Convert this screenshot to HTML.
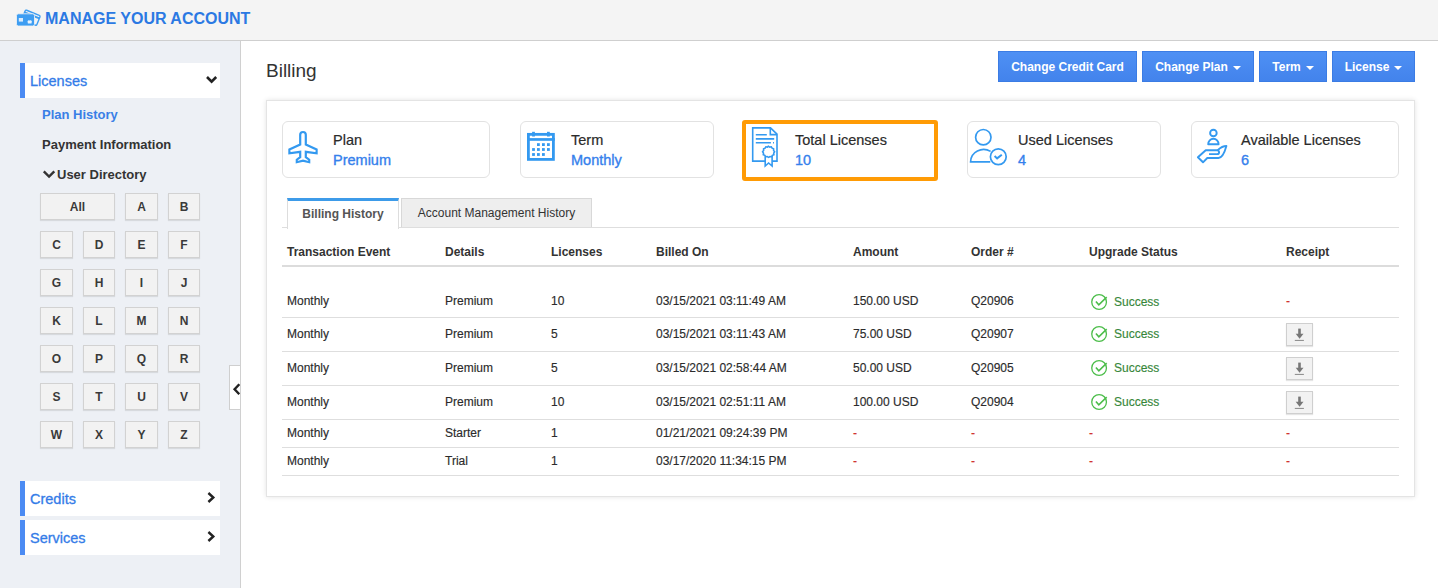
<!DOCTYPE html>
<html><head><meta charset="utf-8">
<style>
*{box-sizing:border-box;margin:0;padding:0}
html,body{width:1438px;height:588px;overflow:hidden;background:#fff;font-family:"Liberation Sans",sans-serif;color:#333}
.abs{position:absolute}
#hdr{position:absolute;left:0;top:0;width:1438px;height:41px;background:#f4f4f4;border-bottom:1px solid #cfcfcf}
#title{position:absolute;left:45px;top:10px;font-size:16px;font-weight:700;color:#2b79e3;line-height:18px;white-space:nowrap}
#side{position:absolute;left:0;top:41px;width:241px;height:547px;background:#edf0f5;border-right:1px solid #d0d0d0}
.sitem{position:absolute;left:20px;width:200px;height:35px;background:#fff;border-left:5px solid #4b8bf3}
.sitem span{position:absolute;left:5px;top:10px;font-size:14.5px;color:#347ce8;line-height:17px;-webkit-text-stroke:0.3px #347ce8}
.lb{position:absolute;width:32px;height:27px;background:#f2f2f2;border:1px solid #d2d2d2;box-shadow:0 1px 1px rgba(0,0,0,.09);font-size:12px;font-weight:700;color:#3a3a3a;text-align:center;line-height:26px}
.btn{position:absolute;top:51px;height:31px;background:linear-gradient(#4e90f4,#4383ec);border:1px solid #3b7ce4;color:#fff;font-size:12px;font-weight:700;line-height:31px;text-align:center;white-space:nowrap}
.caret{display:inline-block;width:0;height:0;border-left:4px solid transparent;border-right:4px solid transparent;border-top:4px solid #fff;vertical-align:middle;margin-left:5px;margin-top:0px}
#panel{position:absolute;left:266px;top:100px;width:1149px;height:397px;background:#fff;border:1px solid #e4e4e4;box-shadow:0 0 5px rgba(0,0,0,.11)}
.card{position:absolute;top:121px;height:57px;background:#fff;border:1px solid #e2e2e2;border-radius:6px}
.card .t1{position:absolute;top:10px;font-size:14.5px;color:#2b2b2b;-webkit-text-stroke:0.2px #2b2b2b;line-height:17px;white-space:nowrap}
.card .t2{position:absolute;top:30px;font-size:14.5px;color:#3580ec;font-weight:400;-webkit-text-stroke:0.35px #3580ec;line-height:17px;white-space:nowrap}
.th{position:absolute;top:245px;font-size:12px;font-weight:700;color:#333;line-height:14px;white-space:nowrap}
.td{position:absolute;font-size:12px;color:#2b2b2b;line-height:14px;white-space:nowrap;-webkit-text-stroke:0.15px #2b2b2b}
.hl{position:absolute;left:282px;width:1117px;height:1px;background:#dedede}
.td.red{color:#d0312d;-webkit-text-stroke:0.15px #d0312d}
.td.ok{color:#37873a;-webkit-text-stroke:0.15px #37873a}
.tabline{position:absolute;left:282px;top:227px;width:1117px;height:1px;background:#dedede}
.tab1{position:absolute;left:287px;top:198px;width:112px;height:31px;background:#fff;border-top:3px solid #3d9be9;border-left:1px solid #ddd;border-right:1px solid #ddd;font-size:12px;font-weight:700;color:#555;text-align:center;line-height:27px}
.tab2{position:absolute;left:401px;top:198px;width:191px;height:29px;background:#eeeeee;border:1px solid #d8d8d8;border-bottom:none;font-size:12px;color:#333;text-align:center;line-height:28px}
.ok-ic{position:absolute}
.dl{position:absolute;left:1286px;width:27px;height:23px;margin-top:1px;background:#f2f2f2;border:1px solid #cfcfcf;box-shadow:0 1px 1px rgba(0,0,0,.1)}
</style></head><body>
<div id="hdr"></div>
<div id="title">MANAGE YOUR ACCOUNT</div>

<div id="side"></div>
<div class="sitem" style="top:63px"><span>Licenses</span></div>
<div class="abs" style="left:42px;top:107px;font-size:13px;font-weight:700;color:#3a7fe6;line-height:15px">Plan History</div>
<div class="abs" style="left:42px;top:137px;font-size:13px;font-weight:700;color:#333;line-height:15px">Payment Information</div>
<div class="abs" style="left:57px;top:167px;font-size:13px;font-weight:700;color:#333;line-height:15px">User Directory</div>

<div class="lb" style="left:40px;top:193px;width:75px">All</div>
<div class="lb" style="left:125px;top:193px;width:33px">A</div>
<div class="lb" style="left:168px;top:193px">B</div>
<div class="lb" style="left:40px;top:231px;width:33px">C</div>
<div class="lb" style="left:83px;top:231px">D</div>
<div class="lb" style="left:125px;top:231px;width:33px">E</div>
<div class="lb" style="left:168px;top:231px">F</div>
<div class="lb" style="left:40px;top:269px;width:33px">G</div>
<div class="lb" style="left:83px;top:269px">H</div>
<div class="lb" style="left:125px;top:269px;width:33px">I</div>
<div class="lb" style="left:168px;top:269px">J</div>
<div class="lb" style="left:40px;top:307px;width:33px">K</div>
<div class="lb" style="left:83px;top:307px">L</div>
<div class="lb" style="left:125px;top:307px;width:33px">M</div>
<div class="lb" style="left:168px;top:307px">N</div>
<div class="lb" style="left:40px;top:345px;width:33px">O</div>
<div class="lb" style="left:83px;top:345px">P</div>
<div class="lb" style="left:125px;top:345px;width:33px">Q</div>
<div class="lb" style="left:168px;top:345px">R</div>
<div class="lb" style="left:40px;top:383px;width:33px">S</div>
<div class="lb" style="left:83px;top:383px">T</div>
<div class="lb" style="left:125px;top:383px;width:33px">U</div>
<div class="lb" style="left:168px;top:383px">V</div>
<div class="lb" style="left:40px;top:421px;width:33px">W</div>
<div class="lb" style="left:83px;top:421px">X</div>
<div class="lb" style="left:125px;top:421px;width:33px">Y</div>
<div class="lb" style="left:168px;top:421px">Z</div>

<div class="sitem" style="top:481px"><span>Credits</span></div>
<div class="sitem" style="top:520px"><span>Services</span></div>

<div class="abs" style="left:266px;top:60px;font-size:19px;color:#333;line-height:21px">Billing</div>

<div class="btn" style="left:998px;width:139px">Change Credit Card</div>
<div class="btn" style="left:1142px;width:112px">Change Plan<span class="caret"></span></div>
<div class="btn" style="left:1259px;width:68px">Term<span class="caret"></span></div>
<div class="btn" style="left:1332px;width:83px">License<span class="caret"></span></div>

<div id="panel"></div>
<div class="card" style="left:282px;width:208px"><div class="t1" style="left:50px">Plan</div><div class="t2" style="left:50px">Premium</div></div>
<div class="card" style="left:520px;width:194px"><div class="t1" style="left:50px">Term</div><div class="t2" style="left:50px">Monthly</div></div>
<div class="card" style="left:742px;top:120px;width:196px;height:61px;border:4px solid #ff9b05;border-radius:3px"><div class="t1" style="left:49px;top:8px">Total Licenses</div><div class="t2" style="left:49px;top:28px">10</div></div>
<div class="card" style="left:967px;width:194px"><div class="t1" style="left:50px">Used Licenses</div><div class="t2" style="left:50px">4</div></div>
<div class="card" style="left:1191px;width:208px"><div class="t1" style="left:49px">Available Licenses</div><div class="t2" style="left:49px">6</div></div>

<!-- logo -->
<svg class="abs" style="left:0;top:0" width="60" height="40" viewBox="0 0 60 40">
 <g transform="translate(0 2) rotate(22 31 17)"><rect x="22.5" y="10.5" width="16" height="10.5" rx="1.2" fill="#f4f4f4" stroke="#3d9df2" stroke-width="1.4"/><rect x="22.5" y="12.3" width="16" height="2" fill="#3d9df2"/></g>
 <rect x="16.5" y="13.8" width="18" height="12.2" rx="1.8" fill="#3d9df2" stroke="#f4f4f4" stroke-width="0.8"/>
 <rect x="18.8" y="18" width="4.2" height="3.6" fill="#d9ecfd"/>
 <path d="M27.5 21.3c0.6-1 1.6-1.3 2.2-0.5c0.6-0.8 1.6-0.5 2.2 0.5l-0.4 2.3h-3.6z" fill="#e8f3fe"/>
</svg>
<!-- licenses chevron -->
<svg class="abs" style="left:200px;top:70px" width="24" height="20"><path d="M7 7 L11.6 11.6 L16.2 7" fill="none" stroke="#222" stroke-width="2.6"/></svg>
<!-- user dir chevron -->
<svg class="abs" style="left:40px;top:168px" width="18" height="14"><path d="M3.8 3.4 L9.05 8.6 L14.3 3.4" fill="none" stroke="#333" stroke-width="2.4"/></svg>
<!-- credits chevron -->
<svg class="abs" style="left:200px;top:488px" width="20" height="20"><path d="M8.4 5 L13.3 9.5 L8.4 14" fill="none" stroke="#222" stroke-width="2.4"/></svg>
<svg class="abs" style="left:200px;top:527px" width="20" height="20"><path d="M8.4 5 L13.3 9.5 L8.4 14" fill="none" stroke="#222" stroke-width="2.4"/></svg>
<!-- plane -->
<svg class="abs" style="left:282px;top:124px" width="40" height="46"><path d="M18.2 10.8 A2.8 2.8 0 0 1 23.8 10.8 L23.8 20.5 L34.6 25.5 L34.6 29.3 L23.8 27.8 L23.8 33.2 L27.2 35.7 L27.2 38.2 L21 36.6 L14.8 38.2 L14.8 35.7 L18.2 33.2 L18.2 27.8 L7.4 29.3 L7.4 25.5 L18.2 20.5 Z" fill="none" stroke="#3399f0" stroke-width="2.2" stroke-linejoin="miter"/></svg>
<!-- calendar -->
<svg class="abs" style="left:520px;top:124px" width="42" height="46" fill="#3399f0">
 <rect x="8.4" y="10.35" width="25" height="25.05" fill="none" stroke="#3399f0" stroke-width="2.8"/>
 <rect x="7" y="14.1" width="27.8" height="2.7"/>
 <rect x="12.1" y="7.8" width="2.8" height="4.7"/><rect x="27" y="7.8" width="2.8" height="4.7"/>
 <rect x="17" y="19.2" width="2.8" height="2.8"/><rect x="22" y="19.2" width="2.8" height="2.8"/><rect x="27" y="19.2" width="2.8" height="2.8"/>
 <rect x="12.1" y="24.1" width="2.8" height="2.8"/><rect x="17" y="24.1" width="2.8" height="2.8"/><rect x="22" y="24.1" width="2.8" height="2.8"/><rect x="27" y="24.1" width="2.8" height="2.8"/>
 <rect x="12.1" y="29.1" width="2.8" height="2.8"/><rect x="17" y="29.1" width="2.8" height="2.8"/><rect x="22" y="29.1" width="2.8" height="2.8"/>
</svg>
<!-- certificate -->
<svg class="abs" style="left:746px;top:122px" width="40" height="48" fill="none" stroke="#3399f0" stroke-width="1.6">
 <path d="M19.2 39.1 L6.7 39.1 L6.7 5.9 L24.5 5.9 L31 12.2 L31 39.1 L26.1 39.1"/>
 <path d="M24.3 5.9 L24.3 12.6 L31 12.6"/>
 <path d="M9.8 12.7 L20.8 12.7 M9.8 16.9 L28.2 16.9 M9.8 20.7 L24.9 20.7 M27 20.7 L28 20.7"/>
 <path d="M22.3 24.2 l1.4 0.9 1.6-0.3 0.8 1.4 1.5 0.6 0 1.6 1 1.3-0.9 1.4 0.2 1.6-1.5 0.6-0.8 1.4-1.6-0.2-1.4 0.9-1.4-0.9-1.6 0.2-0.8-1.4-1.5-0.6 0.2-1.6-0.9-1.4 1-1.3 0-1.6 1.5-0.6 0.8-1.4 1.6 0.3z"/>
 <path d="M19.2 34.5 L19.2 44 L22.6 41 L26.1 44 L26.1 34"/>
</svg>
<!-- used licenses -->
<svg class="abs" style="left:966px;top:124px" width="46" height="46" fill="none" stroke="#3399f0" stroke-width="1.7">
 <circle cx="17.3" cy="13.2" r="7.7"/>
 <path d="M24.6 27.4 A13 12.5 0 0 0 4.6 37.8 L24.3 37.8"/>
 <circle cx="32.3" cy="32.7" r="7.9"/>
 <path d="M28.6 32.1 L31.1 34.4 L35.8 30.7" stroke-width="2"/>
</svg>
<!-- available -->
<svg class="abs" style="left:1192px;top:124px" width="46" height="46" fill="none" stroke="#3399f0" stroke-width="1.9" stroke-linejoin="round">
 <circle cx="21.4" cy="9" r="3.3"/>
 <path d="M16.2 20.2 A5.2 5.5 0 0 1 26.6 20.2 Z"/>
 <path d="M17 30.1 L25 30.1 C27.8 30.1 27.8 26.2 25 26.2 L13.7 26.2 L5.9 33.3 L11 38.3 L15.3 34 L26.5 34 C31 34 33 27 34.4 22 C31 22 28.5 23.5 26 26"/>
</svg>
<!-- collapse tab -->
<div class="abs" style="left:229px;top:365px;width:11px;height:45px;background:#fff;border:1px solid #cfcfcf;border-right:none"></div>
<svg class="abs" style="left:229px;top:379px" width="11" height="20"><path d="M10.3 5.2 L5.6 10.2 L10.3 15.2" fill="none" stroke="#222" stroke-width="2.4"/></svg>

<div class="tabline"></div>
<div class="tab1">Billing History</div>
<div class="tab2">Account Management History</div>
<div class="th" style="left:287px">Transaction Event</div>
<div class="th" style="left:445px">Details</div>
<div class="th" style="left:551px">Licenses</div>
<div class="th" style="left:656px">Billed On</div>
<div class="th" style="left:853px">Amount</div>
<div class="th" style="left:971px">Order #</div>
<div class="th" style="left:1089px">Upgrade Status</div>
<div class="th" style="left:1286px">Receipt</div>
<div class="hl" style="top:265px;height:2px;background:#dcdcdc"></div>
<div class="td" style="left:287px;top:294px">Monthly</div>
<div class="td" style="left:445px;top:294px">Premium</div>
<div class="td" style="left:551px;top:294px">10</div>
<div class="td" style="left:656px;top:294px">03/15/2021 03:11:49 AM</div>
<div class="td" style="left:853px;top:294px">150.00 USD</div>
<div class="td" style="left:971px;top:294px">Q20906</div>
<svg class="ok-ic" style="left:1084px;top:286px" width="30" height="30"><circle cx="15.1" cy="16" r="7.35" fill="none" stroke="#4cbd4a" stroke-width="1.3"/><path d="M11.9 15.5 L14.8 18.8 L22.7 11.2" fill="none" stroke="#4cbd4a" stroke-width="1.6"/></svg>
<div class="td ok" style="left:1114px;top:295px">Success</div>
<div class="td red" style="left:1286px;top:294px">-</div>
<div class="hl" style="top:317px"></div>
<div class="td" style="left:287px;top:327px">Monthly</div>
<div class="td" style="left:445px;top:327px">Premium</div>
<div class="td" style="left:551px;top:327px">5</div>
<div class="td" style="left:656px;top:327px">03/15/2021 03:11:43 AM</div>
<div class="td" style="left:853px;top:327px">75.00 USD</div>
<div class="td" style="left:971px;top:327px">Q20907</div>
<svg class="ok-ic" style="left:1084px;top:318px" width="30" height="30"><circle cx="15.1" cy="16" r="7.35" fill="none" stroke="#4cbd4a" stroke-width="1.3"/><path d="M11.9 15.5 L14.8 18.8 L22.7 11.2" fill="none" stroke="#4cbd4a" stroke-width="1.6"/></svg>
<div class="td ok" style="left:1114px;top:327px">Success</div>
<div class="dl" style="top:322px"><svg width="27" height="23" style="position:absolute;left:-1px;top:-1px"><rect x="12.2" y="5.6" width="2.6" height="5.6" fill="#777"/><path d="M9.7 10.8 L17.5 10.8 L13.6 15.7 Z" fill="#777"/><rect x="8.8" y="16.9" width="9.1" height="1" fill="#888"/></svg></div>
<div class="hl" style="top:351px"></div>
<div class="td" style="left:287px;top:361px">Monthly</div>
<div class="td" style="left:445px;top:361px">Premium</div>
<div class="td" style="left:551px;top:361px">5</div>
<div class="td" style="left:656px;top:361px">03/15/2021 02:58:44 AM</div>
<div class="td" style="left:853px;top:361px">50.00 USD</div>
<div class="td" style="left:971px;top:361px">Q20905</div>
<svg class="ok-ic" style="left:1084px;top:352px" width="30" height="30"><circle cx="15.1" cy="16" r="7.35" fill="none" stroke="#4cbd4a" stroke-width="1.3"/><path d="M11.9 15.5 L14.8 18.8 L22.7 11.2" fill="none" stroke="#4cbd4a" stroke-width="1.6"/></svg>
<div class="td ok" style="left:1114px;top:361px">Success</div>
<div class="dl" style="top:356px"><svg width="27" height="23" style="position:absolute;left:-1px;top:-1px"><rect x="12.2" y="5.6" width="2.6" height="5.6" fill="#777"/><path d="M9.7 10.8 L17.5 10.8 L13.6 15.7 Z" fill="#777"/><rect x="8.8" y="16.9" width="9.1" height="1" fill="#888"/></svg></div>
<div class="hl" style="top:385px"></div>
<div class="td" style="left:287px;top:395px">Monthly</div>
<div class="td" style="left:445px;top:395px">Premium</div>
<div class="td" style="left:551px;top:395px">10</div>
<div class="td" style="left:656px;top:395px">03/15/2021 02:51:11 AM</div>
<div class="td" style="left:853px;top:395px">100.00 USD</div>
<div class="td" style="left:971px;top:395px">Q20904</div>
<svg class="ok-ic" style="left:1084px;top:386px" width="30" height="30"><circle cx="15.1" cy="16" r="7.35" fill="none" stroke="#4cbd4a" stroke-width="1.3"/><path d="M11.9 15.5 L14.8 18.8 L22.7 11.2" fill="none" stroke="#4cbd4a" stroke-width="1.6"/></svg>
<div class="td ok" style="left:1114px;top:395px">Success</div>
<div class="dl" style="top:390px"><svg width="27" height="23" style="position:absolute;left:-1px;top:-1px"><rect x="12.2" y="5.6" width="2.6" height="5.6" fill="#777"/><path d="M9.7 10.8 L17.5 10.8 L13.6 15.7 Z" fill="#777"/><rect x="8.8" y="16.9" width="9.1" height="1" fill="#888"/></svg></div>
<div class="hl" style="top:419px"></div>
<div class="td" style="left:287px;top:426px">Monthly</div>
<div class="td" style="left:445px;top:426px">Starter</div>
<div class="td" style="left:551px;top:426px">1</div>
<div class="td" style="left:656px;top:426px">01/21/2021 09:24:39 PM</div>
<div class="td red" style="left:853px;top:426px">-</div>
<div class="td red" style="left:971px;top:426px">-</div>
<div class="td red" style="left:1089px;top:426px">-</div>
<div class="td red" style="left:1286px;top:426px">-</div>
<div class="hl" style="top:447px"></div>
<div class="td" style="left:287px;top:454px">Monthly</div>
<div class="td" style="left:445px;top:454px">Trial</div>
<div class="td" style="left:551px;top:454px">1</div>
<div class="td" style="left:656px;top:454px">03/17/2020 11:34:15 PM</div>
<div class="td red" style="left:853px;top:454px">-</div>
<div class="td red" style="left:971px;top:454px">-</div>
<div class="td red" style="left:1089px;top:454px">-</div>
<div class="td red" style="left:1286px;top:454px">-</div>
<div class="hl" style="top:475px"></div>
</body></html>
